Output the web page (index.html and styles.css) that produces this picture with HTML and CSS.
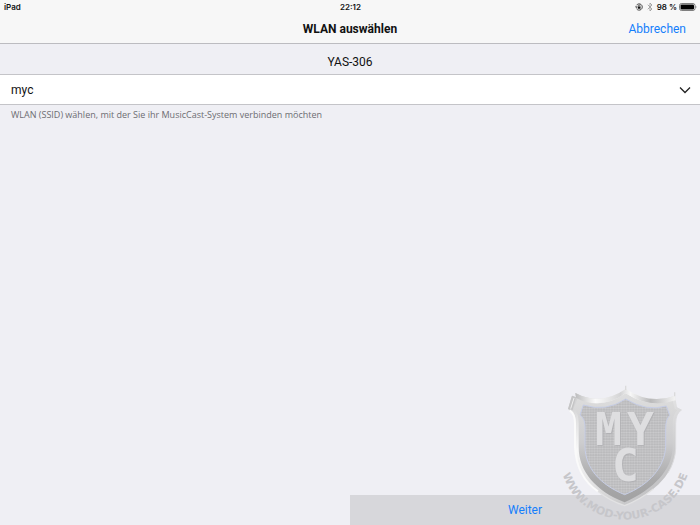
FILE: index.html
```html
<!DOCTYPE html>
<html lang="de">
<head>
  <meta charset="UTF-8" />
  <meta name="viewport" content="width=device-width, initial-scale=1" />
  <title>WLAN auswählen</title>
  <link rel="stylesheet" href="styles.css">
</head>
<body>

  <header class="top">
    <div class="status">
      <span>iPad</span>
      <span class="time">22:12</span>
      <div class="status-icons">
        <svg class="icon-lock" viewBox="0 0 16 16">
          <path d="M3 4.5A6.3 6.3 0 1 1 3 11.5" fill="none" stroke="#222" stroke-width="1.6"/>
          <path d="M0 7h5L2.500 10z" fill="#222"/>
          <rect x="5.500" y="7" width="5.500" height="4.500" fill="#111"/>
          <path d="M6.500 7V5.500a1.700 1.700 0 0 1 3.400 0V7" fill="none" stroke="#111" stroke-width="1.200"/>
        </svg>
        <svg class="icon-bt" viewBox="0 0 12 20">
          <path d="M1.500 5.500L10 14l-4 4V2l4 4-8.500 8.500" fill="none" stroke="#999" stroke-width="1.700"/>
        </svg>
        <span>98 %</span>
        <svg class="icon-battery" viewBox="0 0 36 16">
          <rect x="1" y="1" width="31" height="14" rx="4" fill="#fff" stroke="#555" stroke-width="1.500"/>
          <rect x="3" y="3" width="27" height="10" rx="2" fill="#000"/>
          <path d="M33.500 5q2.500 3 0 6z" fill="#333"/>
        </svg>
      </div>
    </div>
    <div class="navbar">
      <h1>WLAN auswählen</h1>
      <button class="btn-cancel" type="button">Abbrechen</button>
    </div>
  </header>

  <main>
    <h2>YAS-306</h2>
    <div class="field">
      <select id="ssid">
        <option>myc</option>
      </select>
      <svg class="chevron" viewBox="0 0 12 8">
        <path d="M1 1.500l5 5 5-5" fill="none" stroke="#222" stroke-width="1.300"/>
      </svg>
    </div>
    <label class="hint" for="ssid">WLAN (SSID) wählen, mit der Sie ihr MusicCast-System verbinden möchten</label>
  </main>

  <footer>
    <button class="btn-next" type="button">Weiter</button>
  </footer>

  <!-- watermark over the lower right corner -->
  <svg class="watermark" viewBox="0 0 480 450">
    <defs>
      <linearGradient id="rim" x1="0" y1="0" x2="0" y2="1">
        <stop offset="0" stop-color="#dedede"/>
        <stop offset=".45" stop-color="#cdcdcf"/>
        <stop offset=".8" stop-color="#a9a9aa"/>
        <stop offset="1" stop-color="#a1a1a2"/>
      </linearGradient>
      <linearGradient id="edge" x1="0" y1="0" x2="1" y2="1">
        <stop offset="0" stop-color="#c4c4c5"/>
        <stop offset=".3" stop-color="#f8f8f8"/>
        <stop offset=".55" stop-color="#dededf"/>
        <stop offset="1" stop-color="#aeaeb0"/>
      </linearGradient>
      <linearGradient id="topEdge" x1="0" y1="0" x2="1" y2="0">
        <stop offset="0" stop-color="#bdbdbe"/>
        <stop offset=".2" stop-color="#fafafa"/>
        <stop offset=".45" stop-color="#d4d4d5"/>
        <stop offset=".55" stop-color="#f7f7f7"/>
        <stop offset=".75" stop-color="#b9b9ba"/>
        <stop offset="1" stop-color="#f4f4f4"/>
      </linearGradient>
      <pattern id="mesh" width="8" height="8" patternUnits="userSpaceOnUse">
        <rect width="8" height="8" fill="#bababc"/>
        <path d="M0 4l4-3 4 3-4 3z" fill="#cdcdcf"/>
      </pattern>
      <path id="ring" d="M64 286A198 198 0 0 0 447 286"/>
    </defs>
    <path d="M106 54Q182 94 257 42Q330 90 405 62L411 97L425 105Q407 116 407 145V220C405 292 350 351 254 393C158 356 107 297 104 216V145Q104 115 84 102L96 62L108 67Z" fill="url(#edge)"/>
    <path d="M112 72Q184 106 257 55Q330 102 398 76L404 101L412 106Q398 120 398 145V218C396 284 343 341 254 382C168 349 116 289 116 217V144Q116 114 101 101Z" fill="url(#rim)"/>
    <path d="M106 54Q182 94 257 42Q330 90 405 62L407 76Q330 103 257 55Q182 107 108 68Z" fill="url(#topEdge)"/>
    <path d="M96 62L108 67L98 105L84 102Z" fill="#c5c5c6"/>
    <path d="M102 69L92 101" stroke="#efefef" stroke-width="3"/>
    <path d="M408 98L424 105Q407 116 407 145V220Q405 260 384 294" fill="none" stroke="#dcdcde" stroke-width="3"/>
    <path d="M89 106Q105 116 105 145V216C108 282 134 322 174 349" fill="none" stroke="#fafafa" stroke-width="6"/>
    <path d="M174 349Q208 378 254 392Q300 374 340 342" fill="none" stroke="#e2e2e3" stroke-width="4"/>
    <path d="M257 32V45M404 52V64" stroke="#dadadb" stroke-width="4"/>
    <path d="M130 90Q198 112 257 72Q320 111 379 93L389 121Q377 133 377 160V215C374 276 329 329 254 359C180 329 136 279 135 215V155Q135 131 120 120Z" fill="url(#mesh)" stroke="#c6cde5" stroke-width="3"/>
    <g class="initials">
      <text x="205" y="209">M</text>
      <text x="301" y="209">Y</text>
      <text x="256" y="318">C</text>
    </g>
    <text class="site"><textPath href="#ring" startOffset="50%">WWW.MOD-YOUR-CASE.DE</textPath></text>
  </svg>

</body>
</html>
```
FILE: styles.css
```css
* { box-sizing: border-box; }
body {
  margin: 0; min-height: 100vh; display: flex; flex-direction: column;
  position: relative; background: #efeff4; color: #111;
  font-family: Roboto, "Liberation Sans", sans-serif;
}
h1, h2 { margin: 0; text-align: center; }
button, select { font-family: inherit; border: 0; cursor: pointer; }

.top { background: #f7f7f7; border-bottom: 1px solid #bcbcc0; }
.status {
  display: grid; grid-template-columns: 1fr auto 1fr; align-items: center;
  height: 14px; padding: 0 3px 0 4px;
  font-family: Inter, sans-serif; font-size: 8px; font-weight: 600;
}
.status-icons { display: flex; justify-content: flex-end; align-items: center; gap: 4px; }
.icon-lock { width: 8px; height: 8px; }
.icon-bt { width: 6px; height: 10px; }
.icon-battery { width: 18px; height: 8px; margin-left: -2px; }

.navbar {
  display: grid; grid-template-columns: 1fr auto 1fr; align-items: center;
  height: 29px; padding: 0 14px;
}
.navbar h1 { grid-column: 2; font-size: 12px; font-weight: 700; }
.btn-cancel { justify-self: end; padding: 0; background: none; color: #147efb; font-size: 12px; }

main { flex: 1; }
h2 { height: 30px; line-height: 36px; font-size: 12px; font-weight: 400; }
.field {
  display: grid; align-items: center; background: #fff;
  border-top: 1px solid #c4c4c8; border-bottom: 1px solid #c4c4c8;
}
.field select, .chevron { grid-area: 1 / 1; }
.field select {
  width: 100%; height: 29px; padding: 0 32px 0 11px;
  appearance: none; background: none; color: #111; font-size: 12px;
}
.chevron { justify-self: end; width: 12px; height: 8px; margin-right: 9px; pointer-events: none; }
.hint {
  display: block; padding: 3px 11px; color: #6d6d72;
  font-family: "Open Sans", sans-serif; font-size: 9px; line-height: 14px;
}

footer { display: flex; justify-content: flex-end; }
.btn-next { width: 50%; height: 30px; background: #d7d7db; color: #147efb; font-size: 12px; }

.watermark { position: absolute; right: 0; bottom: 0; width: 160px; height: 150px; pointer-events: none; }
.initials {
  font-family: "DejaVu Sans Mono", monospace; font-size: 134px; font-weight: 700;
  text-anchor: middle; fill: #dedee0; filter: drop-shadow(2px 2px 1px #adadb0);
}
.site {
  font-family: "DejaVu Sans", sans-serif; font-size: 33px; font-weight: 700;
  text-anchor: middle; fill: #c6c6ca;
}
```
